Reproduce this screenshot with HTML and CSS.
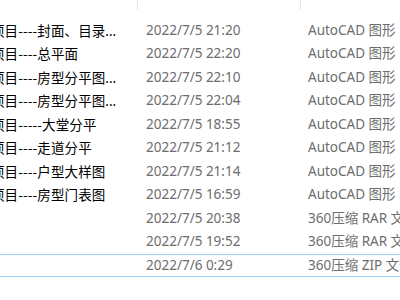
FILE: index.html
```html
<!DOCTYPE html>
<html lang="zh-CN">
<head>
<meta charset="utf-8">
<title>文件列表</title>
<link rel="stylesheet" href="styles.css">
</head>
<body>
<div class="table">
  <div class="header">
    <div class="hcell c-name"><span>名称</span></div>
    <div class="hcell c-date"><span>修改日期</span></div>
    <div class="hcell c-type"><span>类型</span></div>
  </div>
  <div class="rows">
    <div class="row"><div class="cell c-name name">项目----封面、目录<span class="ell">...</span></div><div class="cell c-date">2022/7/5 21:20</div><div class="cell c-type">AutoCAD 图形</div></div>
    <div class="row"><div class="cell c-name name">项目----总平面</div><div class="cell c-date">2022/7/5 22:20</div><div class="cell c-type">AutoCAD 图形</div></div>
    <div class="row"><div class="cell c-name name">项目----房型分平图<span class="ell">...</span></div><div class="cell c-date">2022/7/5 22:10</div><div class="cell c-type">AutoCAD 图形</div></div>
    <div class="row"><div class="cell c-name name">项目----房型分平图<span class="ell">...</span></div><div class="cell c-date">2022/7/5 22:04</div><div class="cell c-type">AutoCAD 图形</div></div>
    <div class="row"><div class="cell c-name name">项目-----大堂分平</div><div class="cell c-date">2022/7/5 18:55</div><div class="cell c-type">AutoCAD 图形</div></div>
    <div class="row"><div class="cell c-name name">项目----走道分平</div><div class="cell c-date">2022/7/5 21:12</div><div class="cell c-type">AutoCAD 图形</div></div>
    <div class="row"><div class="cell c-name name">项目----户型大样图</div><div class="cell c-date">2022/7/5 21:14</div><div class="cell c-type">AutoCAD 图形</div></div>
    <div class="row"><div class="cell c-name name">项目----房型门表图</div><div class="cell c-date">2022/7/5 16:59</div><div class="cell c-type">AutoCAD 图形</div></div>
    <div class="row"><div class="cell c-name name"></div><div class="cell c-date">2022/7/5 20:38</div><div class="cell c-type">360压缩 RAR 文件</div></div>
    <div class="row"><div class="cell c-name name"></div><div class="cell c-date">2022/7/5 19:52</div><div class="cell c-type">360压缩 RAR 文件</div></div>
    <div class="row selected"><div class="cell c-name name"></div><div class="cell c-date">2022/7/6 0:29</div><div class="cell c-type">360压缩 ZIP 文件</div></div>
  </div>
</div>
</body>
</html>
```
FILE: styles.css
```css
html, body {
  margin: 0;
  padding: 0;
  background: #ffffff;
  width: 400px;
  height: 300px;
  overflow: hidden;
}

.table {
  margin-left: -20px;
  margin-top: -18px;
  width: 560px;
  font-family: "Noto Sans", "Noto Sans CJK SC", sans-serif;
  font-size: 13.5px;
}

.header {
  display: flex;
  height: 28px;
}

.hcell {
  box-sizing: border-box;
  border-right: 1px solid #e5e5e5;
  color: #4c607a;
  line-height: 18px;
  padding-top: 1px;
  white-space: nowrap;
  overflow: hidden;
}

.hcell.c-type {
  border-right: none;
}

.c-name {
  width: 158px;
  flex: none;
  padding-left: 11px;
}

.c-date {
  width: 163px;
  flex: none;
  padding-left: 8px;
}

.c-type {
  flex: 1;
  padding-left: 7px;
}

.rows {
  padding-top: 8.75px;
}

.row {
  display: flex;
  box-sizing: border-box;
  height: 23.5px;
  border: 1px solid transparent;
  border-left: none;
}

.row.selected {
  border-color: #99d1ff;
}

.cell {
  box-sizing: border-box;
  line-height: 21.5px;
  white-space: nowrap;
  overflow: hidden;
  color: #6d6d6d;
}

.cell.name {
  color: #000000;
  font-family: "Noto Sans CJK SC", "Noto Sans", sans-serif;
  letter-spacing: 0.1px;
}

.ell {
  font-family: "Noto Sans", sans-serif;
  letter-spacing: 0;
}
```
